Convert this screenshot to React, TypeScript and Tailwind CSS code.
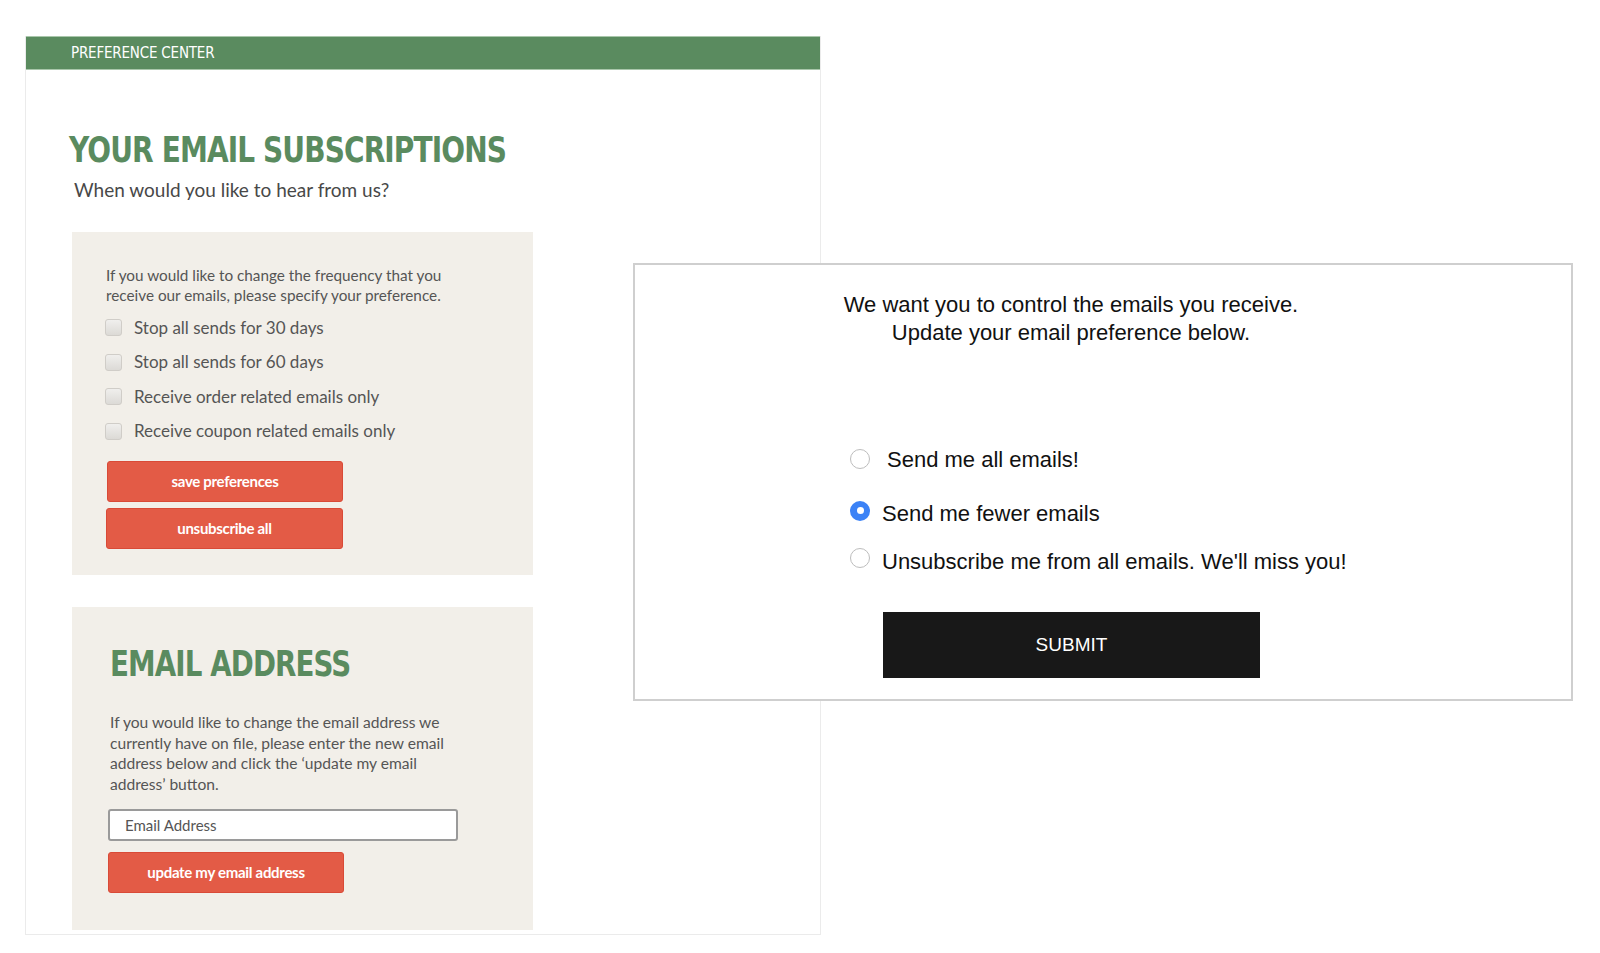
import React from "react";

const futura = { fontFamily: '"Liberation Sans Narrow","DejaVu Sans Condensed","Noto Sans",sans-serif' };

function Checkbox() {
  return (
    <span className="inline-block w-[17px] h-[17px] rounded-[3px] border border-[#d0cdc8] bg-gradient-to-b from-[#f0efed] to-[#dcdad6] shrink-0" />
  );
}

function RedButton({ children, className = "" }: { children: React.ReactNode; className?: string }) {
  return (
    <button
      className={`h-[41px] rounded-[3px] bg-[#e35b46] border border-[#d94a37] text-white font-bold text-[15px] tracking-[-0.3px] flex items-center justify-center font-['Lato',sans-serif] ${className}`}
    >
      {children}
    </button>
  );
}

function Radio({ checked, className = "" }: { checked?: boolean; className?: string }) {
  if (checked) {
    return (
      <span className={`w-[20px] h-[20px] rounded-full bg-[#3b82f6] flex items-center justify-center shrink-0 ${className}`}>
        <span className="w-[7px] h-[7px] rounded-full bg-white" />
      </span>
    );
  }
  return <span className={`w-[20px] h-[20px] rounded-full border border-[#bdbdbd] bg-white shrink-0 ${className}`} />;
}

export default function App() {
  return (
    <div className="relative w-full h-[953px] bg-white overflow-hidden">
      {/* Left card */}
      <div className="ml-[25px] pt-[36px] w-[796px]">
        <div className="border-x border-b border-[#ebebeb] h-[899px] flex flex-col">
          <div className="h-[34px] bg-[#5a8b5f] border-y border-[#a9c7ab] flex items-center pl-[45px]">
            <span className="text-white text-[15px] tracking-[-0.2px]" style={futura}>PREFERENCE CENTER</span>
          </div>
          <div className="pl-[43px]">
            <h1 className="mt-[60px] h-[40px] text-[#5a8b5f] text-[35px] leading-[40px] font-bold tracking-[-1px]" style={futura}>
              <span className="inline-block origin-left scale-x-[0.89] whitespace-nowrap">YOUR EMAIL SUBSCRIPTIONS</span>
            </h1>
            <p className="mt-[8px] ml-[5px] text-[#484848] text-[19px] leading-[24px] font-['Lato',sans-serif]">
              When would you like to hear from us?
            </p>

            <div className="mt-[30px] ml-[3px] w-[461px] h-[343px] bg-[#f2efe9] pl-[34px] pt-[33px] font-['Lato',sans-serif]">
              <p className="text-[15.3px] leading-[20px] text-[#555] w-[355px]">
                If you would like to change the frequency that you receive our emails, please specify your preference.
              </p>
              <div className="mt-[14px] flex flex-col gap-[17.5px]">
                {[
                  "Stop all sends for 30 days",
                  "Stop all sends for 60 days",
                  "Receive order related emails only",
                  "Receive coupon related emails only",
                ].map((t) => (
                  <label key={t} className="flex items-center gap-[12px] h-[17px] -ml-[1px]">
                    <Checkbox />
                    <span className="text-[17px] text-[#555]">{t}</span>
                  </label>
                ))}
              </div>
              <div className="mt-[21px] flex flex-col gap-[6px]">
                <RedButton className="w-[236px] ml-[1px]">save preferences</RedButton>
                <RedButton className="w-[237px]">unsubscribe all</RedButton>
              </div>
            </div>

            <div className="mt-[32px] ml-[3px] w-[461px] h-[323px] bg-[#f2efe9] pl-[38px] pt-[37px] font-['Lato',sans-serif]">
              <h2 className="h-[40px] text-[#5a8b5f] text-[35px] leading-[40px] font-bold tracking-[-1px]" style={futura}>
                <span className="inline-block origin-left scale-x-[0.88] whitespace-nowrap">EMAIL ADDRESS</span>
              </h2>
              <p className="mt-[28px] text-[15.6px] leading-[20.7px] text-[#555] w-[345px]">
                If you would like to change the email address we currently have on file, please enter the new email address below and click the ‘update my email address’ button.
              </p>
              <div className="mt-[14px] -ml-[2px] w-[350px] h-[32px] border-2 border-[#9a9a9a] rounded-[3px] bg-white flex items-center pl-[15px]">
                <span className="text-[15px] text-[#555]">Email Address</span>
              </div>
              <RedButton className="mt-[11px] -ml-[2px] w-[236px] h-[39px]">update my email address</RedButton>
            </div>
          </div>
        </div>
      </div>

      {/* Right overlay card */}
      <div className="absolute left-[633px] top-[263px] w-[940px] h-[438px] bg-white border-2 border-[#cfcfcf] font-['Liberation_Sans',sans-serif]">
        <div className="pr-[64px] pt-[26px] flex flex-col items-center text-[#111] text-[22px] leading-[27.5px]">
          <p>We want you to control the emails you receive.</p>
          <p>Update your email preference below.</p>
        </div>
        <div className="mt-[101px] ml-[215px] flex flex-col">
          <label className="flex items-center gap-[17px] h-[24px]">
            <Radio />
            <span className="text-[22px] text-[#111]">Send me all emails!</span>
          </label>
          <label className="mt-[30px] flex items-center gap-[12px] h-[24px]">
            <Radio checked className="-mt-[5px]" />
            <span className="text-[22px] text-[#111]">Send me fewer emails</span>
          </label>
          <label className="mt-[24px] flex items-center gap-[12px] h-[24px]">
            <Radio className="-mt-[6px]" />
            <span className="text-[22px] text-[#111]">Unsubscribe me from all emails. We'll miss you!</span>
          </label>
        </div>
        <div className="mt-[39px] ml-[248px] w-[377px] h-[66px] bg-[#181818] flex items-center justify-center">
          <span className="text-white text-[19px]">SUBMIT</span>
        </div>
      </div>
    </div>
  );
}
